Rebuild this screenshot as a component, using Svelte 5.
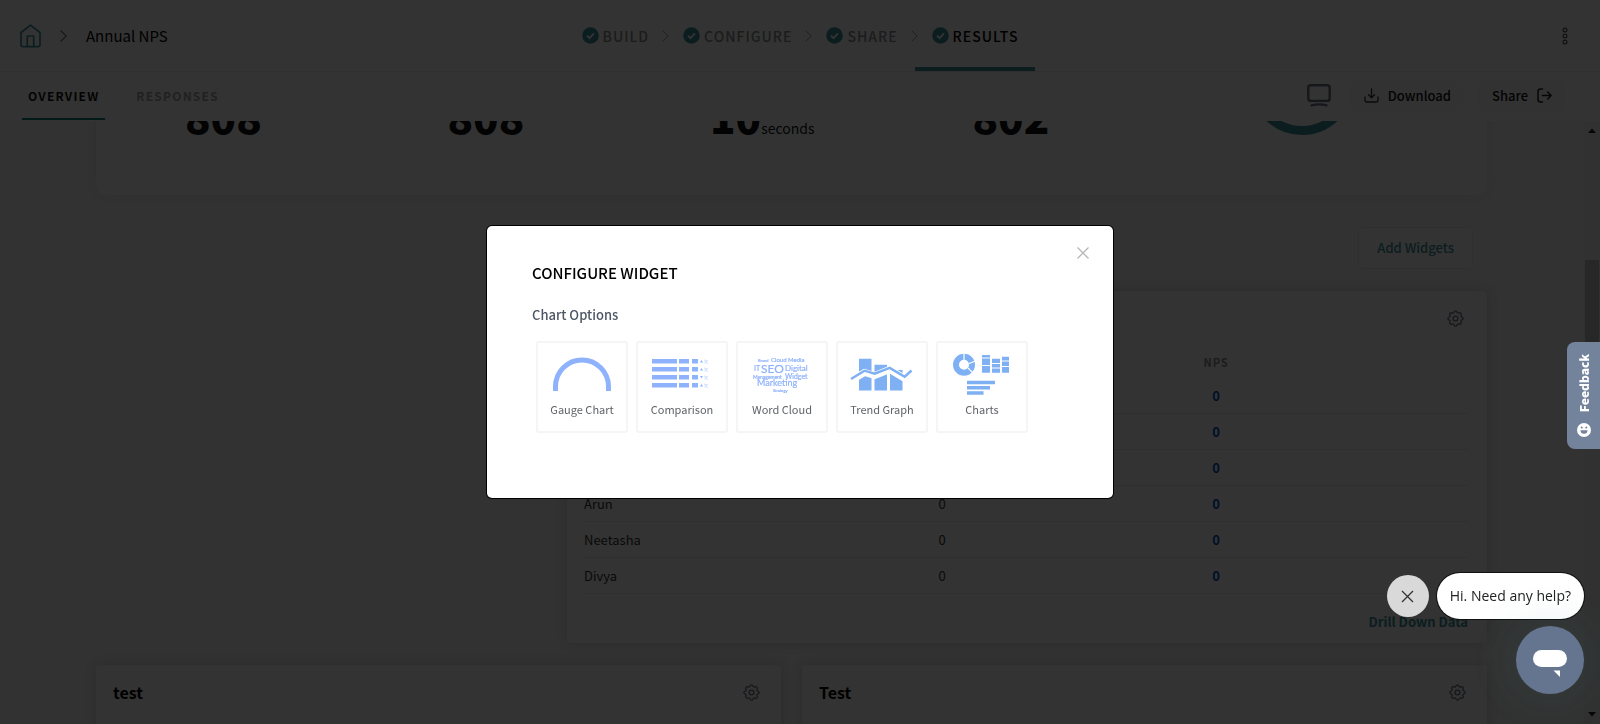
<script lang="ts">
	type Row = { name: string; responses: number; nps: number };

	const steps = ['Build', 'Configure', 'Share', 'Results'];
	const activeStep = 'Results';
	const stats = [
		{ value: '808', unit: '' },
		{ value: '808', unit: '' },
		{ value: '10', unit: 'seconds' },
		{ value: '802', unit: '' }
	];
	const rows: Row[] = [
		{ name: 'Priya', responses: 0, nps: 0 },
		{ name: 'Rahul', responses: 0, nps: 0 },
		{ name: 'Kavin', responses: 0, nps: 0 },
		{ name: 'Arun', responses: 0, nps: 0 },
		{ name: 'Neetasha', responses: 0, nps: 0 },
		{ name: 'Divya', responses: 0, nps: 0 }
	];
	const widgets = ['test', 'Test'];
	const options = ['Gauge Chart', 'Comparison', 'Word Cloud', 'Trend Graph', 'Charts'];

	let content: HTMLElement;

	$effect(() => {
		content.scrollTop = 130;
	});
</script>

{#snippet gear()}
	<button class="icon-btn" aria-label="Widget settings">
		<svg width="17" height="17" viewBox="2 2 20 20" fill="none" stroke="#6b7280" stroke-width="1.5">
			<path d="M10.325 4.317c.426-1.756 2.924-1.756 3.350 0a1.724 1.724 0 0 0 2.573 1.066c1.543-.94 3.310.826 2.370 2.370a1.724 1.724 0 0 0 1.065 2.572c1.756.426 1.756 2.924 0 3.350a1.724 1.724 0 0 0-1.066 2.573c.94 1.543-.826 3.310-2.370 2.370a1.724 1.724 0 0 0-2.572 1.065c-.426 1.756-2.924 1.756-3.350 0a1.724 1.724 0 0 0-2.573-1.066c-1.543.94-3.310-.826-2.370-2.370a1.724 1.724 0 0 0-1.065-2.572c-1.756-.426-1.756-2.924 0-3.350a1.724 1.724 0 0 0 1.066-2.573c-.94-1.543.826-3.310 2.370-2.370.996.608 2.296.07 2.572-1.065z" />
			<circle cx="12" cy="12" r="2.800" />
		</svg>
	</button>
{/snippet}

<div class="page">
	<header class="topbar">
		<nav class="crumbs" aria-label="Breadcrumb">
			<a href="#home" aria-label="Home">
				<svg width="21" height="24" viewBox="0 0 21 24" fill="none" stroke="#3b929b" stroke-width="1.700" stroke-linejoin="round">
					<path d="M1 8.500 10.500 1.200 20 8.500V21a1.600 1.600 0 0 1-1.600 1.600H2.600A1.600 1.600 0 0 1 1 21z" />
					<path d="M7.300 22.500V12h6.400v10.500" />
				</svg>
			</a>
			<svg width="7" height="12" viewBox="0 0 7 12" fill="none" stroke="#777" stroke-width="1.200"><path d="M.6.5 6.200 6 .6 11.500" /></svg>
			<span>Annual NPS</span>
		</nav>
		<ol class="steps">
			{#each steps as step, i}
				<li class="step" class:active={step === activeStep}>
					{#if i > 0}
						<svg class="step-sep" width="7" height="12" viewBox="0 0 7 12" fill="none" stroke="#999" stroke-width="1"><path d="M.6.5 6.200 6 .6 11.500" /></svg>
					{/if}
					<a href="#{step.toLowerCase()}">
						<svg width="17" height="17" viewBox="0 0 17 17" aria-hidden="true">
							<circle cx="8.500" cy="8.500" r="8.300" fill="#3b929b" />
							<path d="M5 8.700 7.500 11.200 12 6.300" fill="none" stroke="#fff" stroke-width="1.800" />
						</svg>
						{step}
					</a>
				</li>
			{/each}
		</ol>
		<button class="icon-btn more" aria-label="More options">
			<svg width="6" height="18" viewBox="0 0 6 18" fill="none" stroke="#555" stroke-width="1.200">
				<circle cx="3" cy="3" r="1.900" /><circle cx="3" cy="9" r="1.900" /><circle cx="3" cy="15" r="1.900" />
			</svg>
		</button>
	</header>

	<div class="subbar">
		<nav class="tabs">
			<a class="tab current" href="#overview">Overview</a>
			<a class="tab" href="#responses">Responses</a>
		</nav>
		<div class="actions">
			<button class="icon-btn" aria-label="Preview">
				<svg width="24" height="23" viewBox="0 0 24 23" fill="none" stroke="#6b7280" stroke-width="2.400" stroke-linecap="round">
					<rect x="1.300" y="1.300" width="21.400" height="15.600" rx="2.500" />
					<path d="M4.500 21.300q7.500-1.800 15 0" />
				</svg>
			</button>
			<button class="pill">
				<svg width="15" height="15" viewBox="0 0 15 15" fill="none" stroke="#333" stroke-width="1.300" stroke-linecap="round" stroke-linejoin="round">
					<path d="M7.500 1v8.500M4.500 6.800l3 3 3-3M1 9v3a2 2 0 0 0 2 2h9a2 2 0 0 0 2-2V9" />
				</svg>
				Download
			</button>
			<button class="pill">
				Share
				<svg width="15" height="15" viewBox="0 0 15 15" fill="none" stroke="#222" stroke-width="1.500" stroke-linecap="round" stroke-linejoin="round">
					<path d="M5.500 1H3.500Q1 1 1 3.500v8Q1 14 3.500 14h2M5.500 7.500H14M10.700 4l3.400 3.500-3.400 3.500" />
				</svg>
			</button>
		</div>
	</div>

	<div class="body">
		<main class="content" bind:this={content}>
			<section class="card stats">
				{#each stats as stat}
					<div class="stat"><strong>{stat.value}</strong>{stat.unit}</div>
				{/each}
				<svg class="ring" width="104" height="104" viewBox="0 0 104 104" fill="none" aria-hidden="true">
					<circle cx="52" cy="52" r="47.500" stroke="#3b929b" stroke-width="9" />
				</svg>
			</section>

			<div class="toolbar">
				<button class="add-btn">Add Widgets</button>
			</div>

			<div class="widget-row">
				<section class="card table-card">
					<div class="card-head end">{@render gear()}</div>
					<table>
						<thead>
							<tr><th class="name">Name</th><th class="num">Responses</th><th class="num">NPS</th><th></th></tr>
						</thead>
						<tbody>
							{#each rows as row}
								<tr>
									<td>{row.name}</td>
									<td class="center">{row.responses}</td>
									<td class="center nps">{row.nps}</td>
									<td></td>
								</tr>
							{/each}
						</tbody>
					</table>
					<a class="drill" href="#drill">Drill Down Data</a>
				</section>
			</div>

			<div class="widget-grid">
				{#each widgets as title}
					<section class="card widget">
						<div class="card-head"><h3>{title}</h3>{@render gear()}</div>
					</section>
				{/each}
			</div>
		</main>
		<div class="scrollbar" aria-hidden="true">
			<svg width="8" height="5" viewBox="0 0 8 5"><path d="M0 5 4 .500 8 5z" fill="#222" /></svg>
			<div class="track"><div class="thumb"></div></div>
			<svg width="8" height="5" viewBox="0 0 8 5"><path d="M0 0 4 4.500 8 0z" fill="#222" /></svg>
		</div>
	</div>
</div>

<div class="overlay">
	<div class="modal" role="dialog" aria-modal="true" aria-labelledby="modal-title">
		<button class="icon-btn modal-close" aria-label="Close">
			<svg width="12" height="12" viewBox="0 0 12 12" stroke="#b5b5b5" stroke-width="1.300"><path d="M.5.500l11 11M11.500.500l-11 11" /></svg>
		</button>
		<h2 id="modal-title">Configure Widget</h2>
		<h4>Chart Options</h4>
		<div class="options">
			{#each options as option}
				<button class="option">
					{#if option === 'Gauge Chart'}
						<svg width="60" height="44" viewBox="0 0 60 44" fill="none" aria-hidden="true">
							<path d="M3.500 38V33.500a26.500 26.500 0 0 1 53 0V38" stroke="#8fb2fc" stroke-width="5" />
						</svg>
					{:else if option === 'Comparison'}
						<svg width="60" height="44" viewBox="0 0 60 44" fill="#8fb2fc" aria-hidden="true">
							{#each [0, 1, 2, 3] as n}
								<g transform="translate(0 {6 + n * 8})">
									<rect x="0" y="0" width="25" height="4.500" />
									<rect x="27" y="0" width="10" height="4.500" />
									<rect x="40" y="0" width="6" height="4.500" />
									<path d={n === 2 ? 'M48 1h3l-1.500 2.500z' : 'M48 3.500h3L49.500 1z'} />
									<path d="M52.300 1.200h1.200M54.500 4.200h1.200M52.700 4.200l2.600-3.200" stroke="#8fb2fc" stroke-width=".7" />
								</g>
							{/each}
						</svg>
					{:else if option === 'Word Cloud'}
						<svg class="cloud" width="60" height="44" viewBox="0 0 60 44" fill="#8fb2fc" aria-hidden="true">
							<text x="6" y="9" font-size="4">Brand</text>
							<text x="19" y="9" font-size="6">Cloud Media</text>
							<text x="2" y="18" font-size="7">IT</text>
							<text x="9" y="20" font-size="12">SEO</text>
							<text x="33" y="18" font-size="8">Digital</text>
							<text x="1" y="26" font-size="5">Management</text>
							<text x="33" y="26" font-size="7">Widget</text>
							<text x="5" y="33" font-size="9">Marketing</text>
							<text x="21" y="39" font-size="4">Strategy</text>
						</svg>
					{:else if option === 'Trend Graph'}
						<svg class="spill" width="60" height="44" viewBox="0 0 60 44" aria-hidden="true">
							<path d="M7 5.700h12.500V37.500H7zM22.500 11.700H35v25.800H22.500zM38 17h12.500v20.500H38z" fill="#7eb0f3" />
							<path d="M-1 27.500 12.500 19.500 22.700 22.500 37.700 16.500 52.700 25.500 60 19" fill="none" stroke="#fff" stroke-width="7" />
							<path d="M-1 26 12.500 17.700 22.700 20.700 37.700 14.900 52.700 23.700 59.500 17.500" fill="none" stroke="#7eb0f3" stroke-width="2.400" />
						</svg>
					{:else}
						<svg width="60" height="44" viewBox="0 0 60 44" aria-hidden="true">
							<path d="M30 2h8v2.500h-8zM30 5.500h8v6.500h-8zM30 13h8v6.700h-8zM40 5.700h8V10h-8zM40 11h8v3.500h-8zM40 15.500h8v4.200h-8zM50 3.700h7V7.500h-7zM50 8.500h7v4.500h-7zM50 14h7v5.700h-7zM15 27.700h28v3.500H15zM15 32.900h23v3.500H15zM15 38.200h16.500v3.500H15z" fill="#7eb0f3" />
							<circle cx="12" cy="11.700" r="8" fill="none" stroke="#7eb0f3" stroke-width="6" />
							<path d="M12 0v8M17 10.500l6.500-2.500M16 15l5 5" stroke="#fff" stroke-width="1.200" />
						</svg>
					{/if}
					<span>{option}</span>
				</button>
			{/each}
		</div>
	</div>
</div>

<button class="feedback">
	<span>Feedback</span>
	<svg width="14" height="14" viewBox="0 0 14 14" aria-hidden="true">
		<circle cx="7" cy="7" r="7" fill="#fff" />
		<g fill="#74839c"><circle cx="4.700" cy="4.500" r="1" /><circle cx="9.300" cy="4.500" r="1" /><path d="M3.500 7.300h7a3.500 3.500 0 0 1-7 0z" /></g>
	</svg>
</button>

<div class="chat">
	<div class="chat-prompt">
		<button class="chat-dismiss" aria-label="Dismiss message">
			<svg width="13" height="13" viewBox="0 0 13 13" stroke="#333" stroke-width="1.300"><path d="M1 1l11 11M12 1 1 12" /></svg>
		</button>
		<button class="chat-bubble">Hi. Need any help?</button>
	</div>
	<button class="chat-launcher" aria-label="Open chat">
		<svg width="34" height="28" viewBox="0 0 34 28" fill="#fff">
			<rect x="0" y="0" width="34" height="17" rx="8.500" />
			<path d="M20.500 20.500H27v6.500z" />
		</svg>
	</button>
</div>

<style>
	:global(body) {
		font-family: 'Noto Sans CJK SC', 'Source Sans Pro', sans-serif;
		font-size: 13px;
		line-height: 20px;
		color: #1a1a1a;
		background: #fff;
	}
	button {
		font: inherit;
		color: inherit;
		border: none;
		background: none;
		padding: 0;
		cursor: pointer;
	}
	a {
		color: inherit;
		text-decoration: none;
	}
	svg {
		display: block;
		flex-shrink: 0;
	}
	h2,
	h3,
	h4 {
		margin: 0;
	}
	.icon-btn {
		display: flex;
	}
	.page {
		display: flex;
		flex-direction: column;
		height: 100vh;
		background: #f7f7f7;
	}
	.topbar {
		display: grid;
		grid-template-columns: 1fr auto 1fr;
		height: 71px;
		padding: 0 32px 0 20px;
		background: #fff;
		border-bottom: 1px solid #e8e8e8;
	}
	.crumbs {
		display: flex;
		align-items: center;
		gap: 19px;
		font-size: 15px;
		color: #000;
	}
	.steps {
		display: flex;
		margin: 0 0 0 12px;
		padding: 0;
		list-style: none;
	}
	.step {
		position: relative;
		display: flex;
		padding: 4px 17px 0;
		border-bottom: 4px solid transparent;
		font-size: 14px;
		font-weight: 500;
		letter-spacing: 1px;
		text-transform: uppercase;
		color: #8c8c8c;
	}
	.step a {
		display: flex;
		align-items: center;
		gap: 4px;
	}
	.step.active {
		color: #000;
		border-color: #3b929b;
	}
	.step-sep {
		position: absolute;
		left: -4px;
		top: 30px;
	}
	.more {
		align-self: center;
		justify-self: end;
	}
	.subbar {
		display: flex;
		justify-content: space-between;
		height: 49px;
		padding: 0 34px 0 22px;
		background: #fff;
	}
	.tabs {
		display: flex;
		gap: 25px;
	}
	.tab {
		display: flex;
		align-items: center;
		padding: 0 6px;
		border-top: 2px solid transparent;
		border-bottom: 2px solid transparent;
		margin-bottom: 1px;
		font-size: 12px;
		font-weight: 700;
		letter-spacing: 0.1em;
		text-transform: uppercase;
		color: #a3a3a3;
	}
	.tab.current {
		color: #111;
		border-bottom-color: #14807e;
	}
	.actions {
		display: flex;
		align-items: center;
		gap: 13px;
		margin-bottom: 2px;
	}
	.actions .icon-btn {
		margin-right: 6px;
	}
	.pill {
		display: flex;
		align-items: center;
		gap: 9px;
		height: 34px;
		padding: 0 14px;
		border-radius: 12px;
		background: #f8f8f8;
		font-weight: 500;
		color: #111;
	}
	.body {
		display: flex;
		flex: 1;
		min-height: 0;
	}
	.content {
		flex: 1;
		min-width: 0;
		padding: 40px 97px 40px 96px;
		overflow-y: scroll;
		scrollbar-width: none;
	}
	.card {
		border-radius: 4px;
		background: #fff;
		box-shadow: 0 0 12px rgba(0, 0, 0, 0.14);
	}
	.stats {
		display: grid;
		grid-template-columns: repeat(4, 1fr) auto;
		align-items: baseline;
		height: 164px;
		padding: 0 133px 0 89px;
		border-radius: 10px;
		box-shadow: 0 0 12px rgba(0, 0, 0, 0.06);
	}
	.stat {
		padding-top: 65px;
		font-size: 14px;
		line-height: 40px;
		color: #111;
	}
	.stat strong {
		font-size: 42px;
		font-weight: 900;
		color: #111318;
	}
	.ring {
		align-self: start;
		margin-left: 15px;
	}
	.toolbar {
		display: flex;
		justify-content: flex-end;
		padding: 32px 14px 22px;
	}
	.add-btn {
		height: 42px;
		padding: 0 18px;
		border: 1px solid #e4eeee;
		border-radius: 4px;
		background: #fff;
		font-weight: 500;
		color: #3b929b;
	}
	.widget-row {
		display: flex;
		justify-content: flex-end;
	}
	.table-card {
		flex: 0 0 920px;
		display: flex;
		flex-direction: column;
		padding: 0 19px 11px 17px;
		box-sizing: border-box;
	}
	.card-head {
		display: flex;
		align-items: center;
		justify-content: space-between;
		height: 54px;
	}
	.card-head.end {
		justify-content: flex-end;
		padding-right: 4px;
	}
	.card-head h3 {
		font-size: 16px;
		font-weight: 700;
		color: #000;
	}
	table {
		width: 100%;
		border-collapse: collapse;
		table-layout: fixed;
	}
	th {
		height: 33px;
		padding: 0;
		font-size: 11px;
		font-weight: 700;
		letter-spacing: 1px;
		color: #8c8c8c;
	}
	.name {
		width: 25%;
		text-align: left;
	}
	.num {
		width: 31%;
	}
	td {
		height: 35px;
		padding: 0;
		border-bottom: 1px solid #ececec;
		color: #333;
	}
	.center {
		text-align: center;
	}
	.nps {
		font-weight: 700;
		color: #0a4bc8;
	}
	.drill {
		align-self: flex-end;
		margin-top: 18px;
		font-weight: 700;
		color: #3b929b;
	}
	.widget-grid {
		display: grid;
		grid-template-columns: 1fr 1fr;
		gap: 21px;
		margin-top: 22px;
	}
	.widget {
		min-height: 300px;
		padding: 0 21px 0 17px;
	}
	.scrollbar {
		display: flex;
		flex-direction: column;
		align-items: center;
		width: 16px;
		padding: 7px 1px 7px 0;
		box-sizing: border-box;
		background: #f4f4f4;
	}
	.track {
		flex: 1;
		width: 14px;
	}
	.thumb {
		height: 22%;
		margin-top: 127px;
		background: #c4c4c4;
	}
	.overlay {
		position: fixed;
		inset: 0;
		display: flex;
		align-items: center;
		justify-content: center;
		background: rgba(0, 0, 0, 0.8);
	}
	.modal {
		position: relative;
		width: 626px;
		max-width: 90vw;
		padding: 37px 44px 65px 45px;
		box-sizing: border-box;
		border-radius: 5px;
		background: #fff;
		box-shadow: 0 0 0 1px #000;
	}
	.modal-close {
		position: absolute;
		top: 21px;
		right: 24px;
	}
	.modal h2 {
		font-size: 15px;
		line-height: 20px;
		font-weight: 500;
		text-transform: uppercase;
		color: #000;
	}
	.modal h4 {
		margin-top: 22px;
		font-size: 13px;
		line-height: 20px;
		font-weight: 500;
		color: #4b5563;
	}
	.options {
		display: flex;
		flex-wrap: wrap;
		gap: 8px;
		padding: 16px 4px 0;
	}
	.option {
		display: flex;
		flex-direction: column;
		align-items: center;
		gap: 2px;
		width: 92px;
		height: 92px;
		padding-top: 10px;
		box-sizing: border-box;
		border: 2px solid #f5f5f5;
		border-radius: 3px;
		font-size: 11px;
		color: #5f6368;
		white-space: nowrap;
	}
	.cloud {
		font-family: Lato, sans-serif;
		stroke: #8fb2fc;
		stroke-width: 0.2;
	}
	.spill {
		overflow: visible;
	}
	.feedback {
		position: fixed;
		right: 0;
		top: 342px;
		display: flex;
		flex-direction: column;
		align-items: center;
		justify-content: center;
		gap: 11px;
		width: 33px;
		height: 107px;
		border-radius: 8px 0 0 8px;
		background: #74839c;
		font-size: 12px;
		font-weight: 900;
		color: #fff;
	}
	.feedback span {
		writing-mode: vertical-rl;
		transform: rotate(180deg);
	}
	.chat {
		position: fixed;
		right: 16px;
		bottom: 30px;
		display: flex;
		flex-direction: column;
		align-items: flex-end;
		gap: 7px;
	}
	.chat-prompt {
		display: flex;
		align-items: center;
		gap: 8px;
	}
	.chat-dismiss,
	.chat-launcher {
		display: flex;
		align-items: center;
		justify-content: center;
		border-radius: 50%;
	}
	.chat-dismiss {
		width: 42px;
		height: 42px;
		background: #d9d9d9;
	}
	.chat-bubble {
		height: 46px;
		padding: 0 13px;
		border-radius: 23px;
		background: #fff;
		box-shadow: 0 0 0 1px #111;
		font-family: 'Open Sans', sans-serif;
		font-size: 14px;
		color: #222;
	}
	.chat-launcher {
		width: 68px;
		height: 68px;
		padding-top: 8px;
		background: #66758f;
		box-shadow: 0 0 40px 8px rgba(60, 150, 140, 0.1);
	}
</style>
